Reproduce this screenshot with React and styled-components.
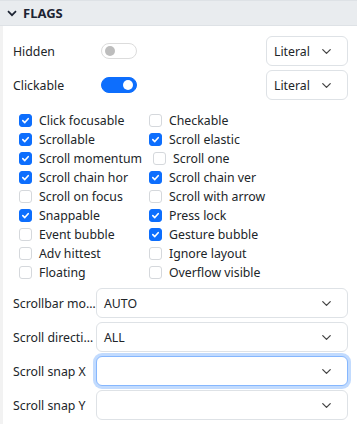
import React from 'react';
import styled, { createGlobalStyle } from 'styled-components';
import { ChevronDown } from 'lucide-react';

const GlobalStyle = createGlobalStyle`
  html, body {
    margin: 0;
    padding: 0;
    background: #fff;
  }
  body {
    font-family: "Noto Sans", "Open Sans", sans-serif;
    font-size: 12.3px;
    color: #212529;
  }
`;

const Panel = styled.div`
  width: 357px;
  height: 430px;
  overflow: hidden;
  background: #fff;
`;

const Header = styled.div`
  display: flex;
  align-items: center;
  gap: 6px;
  height: 26px;
  padding-left: 7px;
  background: #e9ecef;
  border-top: 1px solid #dee2e6;
  border-bottom: 1px solid #dee2e6;
  box-sizing: border-box;
  font-weight: 700;
  font-size: 13px;
  color: #1d2433;
`;

const Body = styled.div`
  border-left: 3px solid #f2f2f2;
  padding: 10px 9px 0 10px;
  display: flex;
  flex-direction: column;
`;

const ToggleRow = styled.div`
  display: flex;
  align-items: center;
  height: 30px;
  margin-bottom: 4px;
`;

const ToggleLabel = styled.span`
  width: 88px;
`;

const Track = styled.span`
  position: relative;
  display: inline-block;
  width: 36px;
  height: 16px;
  border-radius: 8px;
  box-sizing: border-box;
  background: ${p => (p.$on ? '#0d6efd' : '#fff')};
  border: 1px solid ${p => (p.$on ? '#0d6efd' : '#dcdcdc')};
`;

const Knob = styled.span`
  position: absolute;
  top: 2px;
  left: ${p => (p.$on ? '21px' : '3px')};
  width: 10px;
  height: 10px;
  border-radius: 50%;
  background: ${p => (p.$on ? '#fff' : '#bdbdbd')};
`;

const Spacer = styled.span`
  flex: 1;
`;

const SelectBox = styled.div`
  display: flex;
  align-items: center;
  justify-content: space-between;
  box-sizing: border-box;
  height: 30px;
  width: ${p => p.$width || 'auto'};
  flex: ${p => (p.$width ? 'none' : '1')};
  padding: 0 13px 0 7px;
  border: 1px solid ${p => (p.$focused ? '#86b7fe' : '#dee2e6')};
  border-radius: 6px;
  box-shadow: ${p => (p.$focused ? '0 0 0 3px rgba(13,110,253,0.25)' : 'none')};
  background: #fff;
  color: #212529;
`;

const Checks = styled.div`
  display: flex;
  flex-direction: column;
  margin-top: 7px;
  padding-left: 6px;
`;

const CheckRow = styled.div`
  display: flex;
  align-items: center;
  height: 19px;
`;

const CheckItem = styled.label`
  display: flex;
  align-items: center;
  gap: 7px;
  min-width: 119px;
  margin-right: 11px;
  white-space: nowrap;
`;

const Box = styled.span`
  display: inline-flex;
  align-items: center;
  justify-content: center;
  width: 13px;
  height: 13px;
  box-sizing: border-box;
  border-radius: 3px;
  background: ${p => (p.$checked ? '#0d6efd' : '#fff')};
  border: 1px solid ${p => (p.$checked ? '#0d6efd' : '#d5d8dc')};
`;

const Fields = styled.div`
  margin-top: 6px;
  display: flex;
  flex-direction: column;
`;

const FieldRow = styled.div`
  display: flex;
  align-items: center;
  margin-bottom: 4px;
`;

const FieldLabel = styled.span`
  width: 83px;
  flex: none;
  white-space: nowrap;
  overflow: hidden;
  text-overflow: ellipsis;
`;

const Toggle = ({ on }) => (
  <Track $on={on}>
    <Knob $on={on} />
  </Track>
);

const Check = ({ label, checked }) => (
  <CheckItem>
    <Box $checked={checked}>
      {checked && (
        <svg width="9" height="9" viewBox="0 0 10 10">
          <path d="M2 5.2 L4.2 7.3 L8 3" fill="none" stroke="#fff" strokeWidth="1.8" strokeLinecap="round" strokeLinejoin="round" />
        </svg>
      )}
    </Box>
    {label}
  </CheckItem>
);

const Select = ({ value, width, focused }) => (
  <SelectBox $width={width} $focused={focused}>
    <span>{value}</span>
    <ChevronDown size={15} strokeWidth={2} color="#444" />
  </SelectBox>
);

const flags = [
  [['Click focusable', true], ['Checkable', false]],
  [['Scrollable', true], ['Scroll elastic', true]],
  [['Scroll momentum', true], ['Scroll one', false]],
  [['Scroll chain hor', true], ['Scroll chain ver', true]],
  [['Scroll on focus', false], ['Scroll with arrow', false]],
  [['Snappable', true], ['Press lock', true]],
  [['Event bubble', false], ['Gesture bubble', true]],
  [['Adv hittest', false], ['Ignore layout', false]],
  [['Floating', false], ['Overflow visible', false]],
];

const fields = [
  ['Scrollbar mode', 'AUTO'],
  ['Scroll direction', 'ALL'],
  ['Scroll snap X', '', true],
  ['Scroll snap Y', ''],
];

export default function App() {
  return (
    <Panel>
      <GlobalStyle />
      <Header>
        <svg width="10" height="7" viewBox="0 0 10 7">
          <path d="M1 1.2 L5 5.2 L9 1.2" fill="none" stroke="#1d2433" strokeWidth="1.7" />
        </svg>
        FLAGS
      </Header>
      <Body>
        <ToggleRow>
          <ToggleLabel>Hidden</ToggleLabel>
          <Toggle on={false} />
          <Spacer />
          <Select value="Literal" width="82px" />
        </ToggleRow>
        <ToggleRow>
          <ToggleLabel>Clickable</ToggleLabel>
          <Toggle on />
          <Spacer />
          <Select value="Literal" width="82px" />
        </ToggleRow>
        <Checks>
          {flags.map((row, i) => (
            <CheckRow key={i}>
              {row.map(([label, checked]) => (
                <Check key={label} label={label} checked={checked} />
              ))}
            </CheckRow>
          ))}
        </Checks>
        <Fields>
          {fields.map(([label, value, focused]) => (
            <FieldRow key={label}>
              <FieldLabel>{label}</FieldLabel>
              <Select value={value} focused={focused} />
            </FieldRow>
          ))}
        </Fields>
      </Body>
    </Panel>
  );
}
